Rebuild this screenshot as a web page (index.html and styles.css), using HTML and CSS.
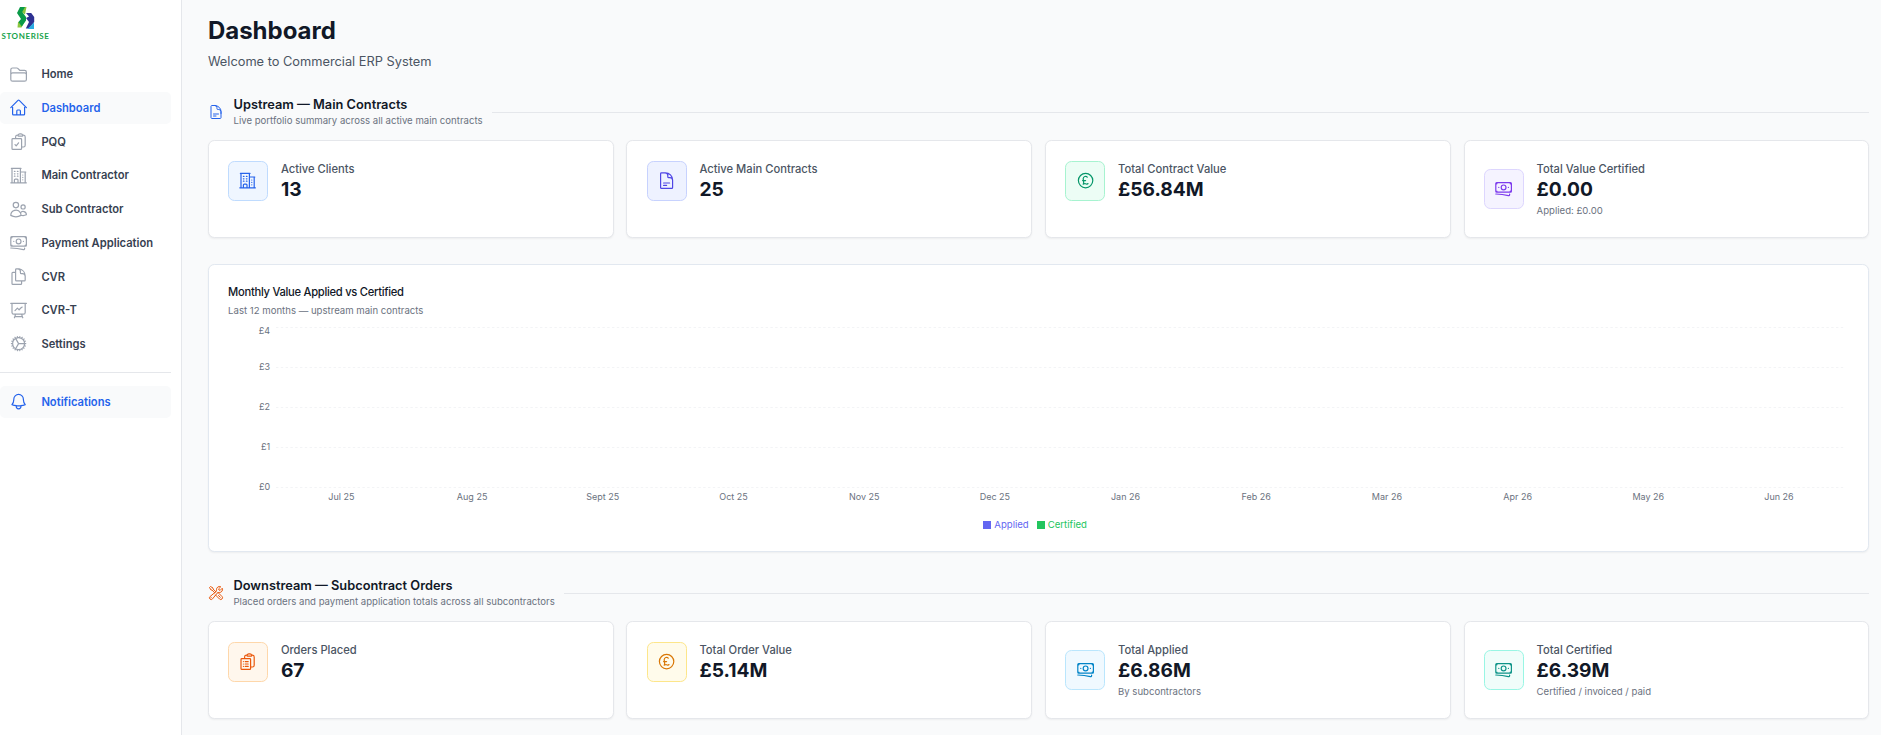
FILE: index.html
```html
<!DOCTYPE html>
<html lang="en">
<head>
<meta charset="utf-8">
<title>Dashboard</title>
<link rel="stylesheet" href="styles.css">
</head>
<body>
<svg class="defs" aria-hidden="true">
  <symbol id="folder" viewBox="0 0 24 24"><path d="M2.25 12.75V12A2.25 2.25 0 0 1 4.5 9.75h15A2.25 2.25 0 0 1 21.75 12v.75m-8.69-6.44-2.12-2.12a1.5 1.5 0 0 0-1.061-.44H4.5A2.25 2.25 0 0 0 2.25 6v12a2.25 2.25 0 0 0 2.25 2.25h15A2.25 2.25 0 0 0 21.75 18V9a2.25 2.25 0 0 0-2.25-2.25h-5.379a1.5 1.5 0 0 1-1.06-.44Z"/></symbol>
  <symbol id="home" viewBox="0 0 24 24"><path d="m2.25 12 8.954-8.955c.44-.439 1.152-.439 1.591 0L21.75 12M4.5 9.75v10.125c0 .621.504 1.125 1.125 1.125H9.75v-4.875c0-.621.504-1.125 1.125-1.125h2.25c.621 0 1.125.504 1.125 1.125V21h4.125c.621 0 1.125-.504 1.125-1.125V9.75M8.25 21h8.25"/></symbol>
  <symbol id="clip-check" viewBox="0 0 24 24"><path d="M11.35 3.836c-.065.21-.1.433-.1.664 0 .414.336.75.75.75h4.5a.75.75 0 0 0 .75-.75 2.25 2.25 0 0 0-.1-.664m-5.8 0A2.251 2.251 0 0 1 13.5 2.25H15c1.012 0 1.867.668 2.15 1.586m-5.8 0c-.376.023-.75.05-1.124.08C9.095 4.01 8.25 4.973 8.25 6.108V8.25m8.9-4.414c.376.023.75.05 1.124.08 1.131.094 1.976 1.057 1.976 2.192V16.5A2.25 2.25 0 0 1 18 18.75h-2.25m-7.5-10.5H4.875c-.621 0-1.125.504-1.125 1.125v11.25c0 .621.504 1.125 1.125 1.125h9.75c.621 0 1.125-.504 1.125-1.125V18.75m-7.5-10.5h6.375c.621 0 1.125.504 1.125 1.125v9.375m-8.25-3 1.5 1.5 3-3.75"/></symbol>
  <symbol id="clip-list" viewBox="0 0 24 24"><path d="M8.25 8.25H4.875c-.621 0-1.125.504-1.125 1.125v11.25c0 .621.504 1.125 1.125 1.125h9.75c.621 0 1.125-.504 1.125-1.125V9.375c0-.621-.504-1.125-1.125-1.125H8.25ZM6.75 12h.008v.008H6.75V12Zm0 3h.008v.008H6.75V15Zm0 3h.008v.008H6.75V18ZM9 12h3.75M9 15h3.75M9 18h3.75m3 .75H18a2.25 2.25 0 0 0 2.25-2.25V6.108c0-1.135-.845-2.098-1.976-2.192a48.424 48.424 0 0 0-1.123-.08m-5.801 0c-.065.21-.1.433-.1.664 0 .414.336.75.75.75h4.5a.75.75 0 0 0 .75-.75 2.25 2.25 0 0 0-.1-.664m-5.8 0A2.251 2.251 0 0 1 13.5 2.25H15c1.012 0 1.867.668 2.15 1.586m-5.8 0c-.376.023-.75.05-1.124.08C9.095 4.01 8.25 4.973 8.25 6.108V8.25"/></symbol>
  <symbol id="building" viewBox="0 0 24 24"><path d="M2.25 21h19.5m-18-18v18m10.5-18v18m6-13.5V21M6.75 6.75h.75m-.75 3h.75m-.75 3h.75m3-6h.75m-.75 3h.75m-.75 3h.75M6.75 21v-3.375c0-.621.504-1.125 1.125-1.125h2.25c.621 0 1.125.504 1.125 1.125V21M3 3h12m-.75 4.5H21m-3.750 3.750h.008v.008h-.008v-.008Zm0 3h.008v.008h-.008v-.008Zm0 3h.008v.008h-.008v-.008Z"/></symbol>
  <symbol id="users" viewBox="0 0 24 24"><path d="M15 19.128a9.38 9.38 0 0 0 2.625.372 9.337 9.337 0 0 0 4.121-.952 4.125 4.125 0 0 0-7.533-2.493M15 19.128v-.003c0-1.113-.285-2.16-.786-3.07M15 19.128v.106A12.318 12.318 0 0 1 8.624 21c-2.331 0-4.512-.645-6.374-1.766l-.001-.109a6.375 6.375 0 0 1 11.964-3.07M12 6.375a3.375 3.375 0 1 1-6.75 0 3.375 3.375 0 0 1 6.75 0Zm8.25 2.25a2.625 2.625 0 1 1-5.25 0 2.625 2.625 0 0 1 5.25 0Z"/></symbol>
  <symbol id="cash" viewBox="0 0 24 24"><path d="M2.25 18.75a60.07 60.07 0 0 1 15.797 2.101c.727.198 1.453-.342 1.453-1.096V18.75M3.75 4.5v.75A.75.75 0 0 1 3 6h-.75m0 0v-.375c0-.621.504-1.125 1.125-1.125H20.25M2.25 6v9m18-10.5v.75c0 .414.336.75.75.75h.75m-1.5-1.5h.375c.621 0 1.125.504 1.125 1.125v9.75c0 .621-.504 1.125-1.125 1.125h-.375m1.5-1.5H21a.75.75 0 0 0-.75.75v.75m0 0H3.75m0 0h-.375a1.125 1.125 0 0 1-1.125-1.125V15m1.5 1.5v-.75A.75.75 0 0 0 3 15h-.75M15 10.5a3 3 0 1 1-6 0 3 3 0 0 1 6 0Zm3 0h.008v.008H18V10.5Zm-12 0h.008v.008H6V10.5Z"/></symbol>
  <symbol id="copy" viewBox="0 0 24 24"><path d="M15.75 17.25v3.375c0 .621-.504 1.125-1.125 1.125h-9.75a1.125 1.125 0 0 1-1.125-1.125V7.875c0-.621.504-1.125 1.125-1.125H6.75a9.06 9.06 0 0 1 1.5.124m7.5 10.376h3.375c.621 0 1.125-.504 1.125-1.125V11.25c0-4.46-3.243-8.161-7.5-8.876a9.06 9.06 0 0 0-1.5-.124H9.375c-.621 0-1.125.504-1.125 1.125v3.5m7.5 10.375H9.375a1.125 1.125 0 0 1-1.125-1.125v-9.25m12 6.625v-1.875a3.375 3.375 0 0 0-3.375-3.375h-1.5a1.125 1.125 0 0 1-1.125-1.125v-1.5a3.375 3.375 0 0 0-3.375-3.375H9.75"/></symbol>
  <symbol id="board" viewBox="0 0 24 24"><path d="M3.75 3v11.25A2.25 2.25 0 0 0 6 16.5h2.25M3.75 3h-1.5m1.5 0h16.5m0 0h1.5m-1.5 0v11.25A2.25 2.25 0 0 1 18 16.5h-2.25m-7.5 0h7.5m-7.5 0-1 3m8.5-3 1 3m0 0 .5 1.5m-.5-1.5h-9.5m0 0-.5 1.5m.75-9 3-3 2.148 2.148A12.061 12.061 0 0 1 16.5 7.605"/></symbol>
  <symbol id="cog" viewBox="0 0 24 24"><path d="M4.5 12a7.5 7.5 0 0 0 15 0m-15 0a7.5 7.5 0 1 1 15 0m-15 0H3m16.5 0H21m-1.5 0H12m-8.457 3.077 1.41-.513m14.095-5.13 1.41-.513M5.106 17.785l1.15-.964m11.49-9.642 1.149-.964M7.501 19.795l.75-1.3m7.5-12.99.75-1.3m-6.063 16.658.26-1.477m2.605-14.772.26-1.477m0 17.726-.26-1.477M10.698 4.614l-.26-1.477M16.5 19.794l-.75-1.299M7.5 4.205 12 12m6.894 5.785-1.149-.964M6.256 7.178l-1.15-.964m15.352 8.864-1.41-.513M4.954 9.435l-1.41-.514M12.002 12l-3.75 6.495"/></symbol>
  <symbol id="bell" viewBox="0 0 24 24"><path d="M14.857 17.082a23.848 23.848 0 0 0 5.454-1.31A8.967 8.967 0 0 1 18 9.75V9A6 6 0 0 0 6 9v.75a8.967 8.967 0 0 1-2.312 6.022c1.733.64 3.56 1.085 5.455 1.31m5.714 0a24.255 24.255 0 0 1-5.714 0m5.714 0a3 3 0 1 1-5.714 0"/></symbol>
  <symbol id="doc" viewBox="0 0 24 24"><path d="M19.5 14.25v-2.625a3.375 3.375 0 0 0-3.375-3.375h-1.5A1.125 1.125 0 0 1 13.5 7.125v-1.5a3.375 3.375 0 0 0-3.375-3.375H8.25m0 12.75h7.5m-7.5 3H12M10.5 2.25H5.625c-.621 0-1.125.504-1.125 1.125v17.25c0 .621.504 1.125 1.125 1.125h12.75c.621 0 1.125-.504 1.125-1.125V11.25a9 9 0 0 0-9-9Z"/></symbol>
  <symbol id="pound" viewBox="0 0 24 24"><path d="M14.121 7.629A3 3 0 0 0 9.017 9.43c-.023.212-.002.425.028.636l.506 3.541a4.5 4.5 0 0 1-.43 2.65L9 16.5l1.539-.513a2.25 2.25 0 0 1 1.422 0l.655.218a2.25 2.25 0 0 0 1.718-.122L15 15.75M8.25 12H12m9 0a9 9 0 1 1-18 0 9 9 0 0 1 18 0Z"/></symbol>
  <symbol id="tools" viewBox="0 0 24 24"><path d="M11.42 15.17 17.25 21A2.652 2.652 0 0 0 21 17.25l-5.877-5.877M11.42 15.17l2.496-3.03c.317-.384.74-.626 1.208-.766M11.42 15.17l-4.655 5.653a2.548 2.548 0 1 1-3.586-3.586l6.837-5.63m5.108-.233c.55-.164 1.163-.188 1.743-.14a4.5 4.5 0 0 0 4.486-6.336l-3.276 3.277a3.004 3.004 0 0 1-2.25-2.25l3.276-3.276a4.5 4.5 0 0 0-6.336 4.486c.091 1.076-.071 2.264-.904 2.95l-.102.085m-1.745 1.437L5.909 7.5H4.5L2.25 3.75l1.5-1.5L7.5 4.5v1.409l4.26 4.26m-1.745 1.437 1.745-1.437m6.615 8.206L15.75 15.75M4.867 19.125h.008v.008h-.008v-.008Z"/></symbol>
</svg>
<div class="app">
  <aside class="sidebar">
    <div class="logo">
      <svg class="logo-mark" viewBox="0 0 18 23">
        <path fill="#8cc63f" d="M7 0h2.500l-1.500 7.500L4.500 5zM1 15l7-1-3.500 6.500H.5z"/>
        <path fill="#0a9a48" d="M3 0h5L5.200 5 9 10v3.500L4.800 19.500 1.500 15 4 12 0 6z"/>
        <path fill="#2e3192" d="M9 6h5.200L17.200 10v5L12 21.500H8.800L12 15 9 11l3-1.500z"/>
        <path fill="#29abe2" d="M17 15.500V22h-6.500z"/>
      </svg>
      <span class="logo-text">STONERISE</span>
    </div>
    <nav class="nav">
      <a class="item"><svg class="icon"><use href="#folder"/></svg>Home</a>
      <a class="item active"><svg class="icon"><use href="#home"/></svg>Dashboard</a>
      <a class="item"><svg class="icon"><use href="#clip-check"/></svg>PQQ</a>
      <a class="item"><svg class="icon"><use href="#building"/></svg>Main Contractor</a>
      <a class="item"><svg class="icon"><use href="#users"/></svg>Sub Contractor</a>
      <a class="item"><svg class="icon"><use href="#cash"/></svg>Payment Application</a>
      <a class="item"><svg class="icon"><use href="#copy"/></svg>CVR</a>
      <a class="item"><svg class="icon"><use href="#board"/></svg>CVR-T</a>
      <a class="item"><svg class="icon"><use href="#cog"/></svg>Settings</a>
    </nav>
    <div class="nav-foot">
      <a class="item active"><svg class="icon"><use href="#bell"/></svg>Notifications</a>
    </div>
  </aside>
  <main class="main">
    <h1 class="title">Dashboard</h1>
    <p class="welcome">Welcome to Commercial ERP System</p>

    <header class="section">
      <svg class="icon section-icon blue"><use href="#doc"/></svg>
      <div><h2 class="section-title">Upstream — Main Contracts</h2><p class="section-sub">Live portfolio summary across all active main contracts</p></div>
      <span class="rule"></span>
    </header>
    <div class="cards">
      <div class="card"><span class="tile t-blue"><svg class="icon"><use href="#building"/></svg></span><div><p class="label">Active Clients</p><p class="value">13</p></div></div>
      <div class="card"><span class="tile t-indigo"><svg class="icon"><use href="#doc"/></svg></span><div><p class="label">Active Main Contracts</p><p class="value">25</p></div></div>
      <div class="card"><span class="tile t-green"><svg class="icon"><use href="#pound"/></svg></span><div><p class="label">Total Contract Value</p><p class="value">£56.84M</p></div></div>
      <div class="card"><span class="tile t-violet"><svg class="icon"><use href="#cash"/></svg></span><div><p class="label">Total Value Certified</p><p class="value">£0.00</p><p class="sub">Applied: £0.00</p></div></div>
    </div>

    <section class="chart-card">
      <h3 class="chart-title">Monthly Value Applied vs Certified</h3>
      <p class="chart-sub">Last 12 months — upstream main contracts</p>
      <div class="plot">
        <div class="y-axis"><span class="tick-top">£4</span><span>£3</span><span>£2</span><span>£1</span><span>£0</span></div>
        <svg class="grid">
          <line x1="0" x2="100%" y1=".5" y2=".5"/><line x1="0" x2="100%" y1="40.500" y2="40.500"/><line x1="0" x2="100%" y1="80.500" y2="80.500"/><line x1="0" x2="100%" y1="120.500" y2="120.500"/><line x1="0" x2="100%" y1="160.500" y2="160.500"/>
        </svg>
      </div>
      <div class="x-axis"><span>Jul 25</span><span>Aug 25</span><span>Sept 25</span><span>Oct 25</span><span>Nov 25</span><span>Dec 25</span><span>Jan 26</span><span>Feb 26</span><span>Mar 26</span><span>Apr 26</span><span>May 26</span><span>Jun 26</span></div>
      <div class="legend"><span class="key applied">Applied</span><span class="key certified">Certified</span></div>
    </section>

    <header class="section">
      <svg class="icon section-icon orange"><use href="#tools"/></svg>
      <div><h2 class="section-title">Downstream — Subcontract Orders</h2><p class="section-sub">Placed orders and payment application totals across all subcontractors</p></div>
      <span class="rule"></span>
    </header>
    <div class="cards">
      <div class="card"><span class="tile t-orange"><svg class="icon"><use href="#clip-list"/></svg></span><div><p class="label">Orders Placed</p><p class="value">67</p></div></div>
      <div class="card"><span class="tile t-amber"><svg class="icon"><use href="#pound"/></svg></span><div><p class="label">Total Order Value</p><p class="value">£5.14M</p></div></div>
      <div class="card"><span class="tile t-sky"><svg class="icon"><use href="#cash"/></svg></span><div><p class="label">Total Applied</p><p class="value">£6.86M</p><p class="sub">By subcontractors</p></div></div>
      <div class="card"><span class="tile t-teal"><svg class="icon"><use href="#cash"/></svg></span><div><p class="label">Total Certified</p><p class="value">£6.39M</p><p class="sub">Certified / invoiced / paid</p></div></div>
    </div>
  </main>
</div>
</body>
</html>
```
FILE: styles.css
```css
* { box-sizing: border-box; margin: 0; padding: 0; }
body { font-family: Inter, "Liberation Sans", sans-serif; font-size: 12.8px; color: #111827; background: #f9fafb; height: 735px; overflow: hidden; }
.defs { display: none; }
.app { display: flex; height: 735px; }
.icon { width: 19.2px; height: 19.2px; flex: none; fill: none; stroke: currentColor; stroke-width: 1.5; stroke-linecap: round; stroke-linejoin: round; }

.sidebar { width: 182.4px; flex: none; background: #fff; border-right: 1px solid #e5e7eb; }
.logo { width: 50px; height: 58.4px; padding: 7px 0 0 1px; display: flex; flex-direction: column; align-items: center; }
.logo-mark { width: 18px; height: 23px; flex: none; }
.logo-text { font-family: Lato, sans-serif; font-weight: 700; font-size: 8px; line-height: 10px; letter-spacing: .6px; color: #16a34a; margin-top: 1px; }
.nav { display: flex; flex-direction: column; gap: 1.700px; width: 171px; padding-bottom: 12px; border-bottom: 1px solid #e5e7eb; }
.nav-foot { width: 171px; padding-top: 13px; }
.item { display: flex; align-items: center; height: 32px; padding-left: 9px; gap: 13.200px; font-size: 11.2px; font-weight: 600; color: #374151; border-radius: 5px; }
.item .icon { color: #9ca3af; }
.item.active { background: #f9fafb; color: #2563eb; }
.item.active .icon { color: #2563eb; }

.main { flex: 1; padding: 16px 11.700px 0 25.500px; }
.title { font-size: 24px; line-height: 29px; font-weight: 700; }
.welcome { font-size: 12.8px; line-height: 19px; color: #4b5563; margin-top: 7px; }
.section { display: flex; align-items: center; gap: 9.600px; height: 32px; }
.welcome + .section { margin-top: 25px; }
.section-icon { width: 16px; height: 16px; }
.blue { color: #2563eb; }
.orange { color: #ea580c; }
.section-title { font-size: 12.8px; line-height: 16px; font-weight: 600; }
.section-sub { font-size: 9.600px; line-height: 13px; color: #6b7280; margin-top: 1px; }
.rule { flex: 1; height: 1px; background: #e5e7eb; }
.cards { display: grid; grid-template-columns: repeat(4, 1fr); gap: 12.800px; margin-top: 12px; }
.card { height: 98px; display: flex; align-items: center; gap: 12.800px; padding: 0 19.2px; background: #fff; border: 1px solid #e5e7eb; border-radius: 6.400px; box-shadow: 0 1px 2px rgba(0,0,0,.05); }
.card:not(:has(.sub)) { align-items: flex-start; padding-top: 20px; }
.tile { width: 40px; height: 40px; flex: none; display: flex; align-items: center; justify-content: center; border: 1px solid; border-radius: 6.400px; }
.t-blue { color: #2563eb; background: #eff6ff; border-color: #bfdbfe; }
.t-indigo { color: #4f46e5; background: #eef2ff; border-color: #c7d2fe; }
.t-green { color: #059669; background: #ecfdf5; border-color: #a7f3d0; }
.t-violet { color: #7c3aed; background: #f5f3ff; border-color: #ddd6fe; }
.t-orange { color: #ea580c; background: #fff7ed; border-color: #fed7aa; }
.t-amber { color: #d97706; background: #fffbeb; border-color: #fde68a; }
.t-sky { color: #0284c7; background: #f0f9ff; border-color: #bae6fd; }
.t-teal { color: #0d9488; background: #f0fdfa; border-color: #99f6e4; }
.label { font-size: 11.2px; line-height: 16px; font-weight: 500; color: #4b5563; }
.value { font-size: 19.2px; line-height: 24px; font-weight: 700; }
.sub { font-size: 9.600px; line-height: 13px; color: #6b7280; margin-top: 3px; }

.chart-card { height: 288px; margin: 26px 0 25px; padding: 19px 19.2px 0; background: #fff; border: 1px solid #e2e8f0; border-radius: 6.400px; box-shadow: 0 1px 2px rgba(0,0,0,.05); }
.chart-title { font-size: 11.2px; line-height: 16px; font-weight: 500; letter-spacing: -.025em; }
.chart-sub { font-size: 9.600px; line-height: 13px; color: #6b7280; margin-top: 4px; }
.plot { display: flex; gap: 6px; height: 161px; margin-top: 10px; padding-right: 4.800px; }
.y-axis { width: 42px; flex: none; text-align: right; font-size: 9px; line-height: 40px; color: #6b7280; margin-top: -20px; }
.y-axis span { display: block; height: 40px; }
.y-axis .tick-top { padding-top: 4px; }
.grid { flex: 1; height: 161px; overflow: visible; }
.grid line { stroke: #f3f4f6; stroke-dasharray: 2.400 2.400; }
.x-axis { display: grid; grid-template-columns: repeat(12, 1fr); margin: 2px 4.800px 0 48px; font-size: 9px; line-height: 14px; color: #6b7280; text-align: center; }
.legend { display: flex; justify-content: center; gap: 8px; margin-top: 14px; padding-right: 7px; font-size: 9.600px; line-height: 14px; }
.key { display: flex; align-items: center; gap: 3px; }
.key::before { content: ""; width: 8px; height: 8px; background: currentColor; }
.applied { color: #6366f1; }
.certified { color: #22c55e; }
```
